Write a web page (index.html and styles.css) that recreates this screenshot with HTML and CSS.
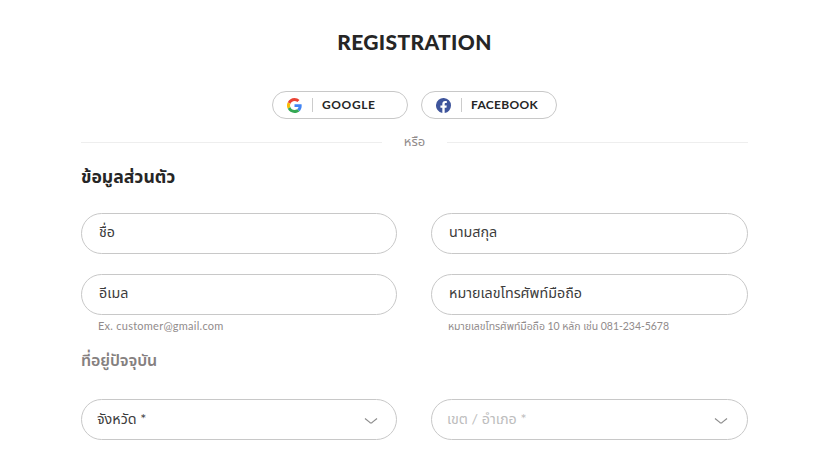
FILE: index.html
```html
<!DOCTYPE html>
<html lang="th">
<head>
  <meta charset="UTF-8" />
  <meta name="viewport" content="width=device-width, initial-scale=1.0" />
  <title>Registration</title>
  <link rel="stylesheet" href="styles.css">
</head>
<body>
  <main class="register">
    <h1>REGISTRATION</h1>

    <div class="social">
      <button type="button" class="social-btn google">
        <svg width="15" height="15" viewBox="0 0 48 48">
          <path fill="#EA4335" d="M24 9.5c3.54 0 6.71 1.22 9.21 3.6l6.85-6.85C35.9 2.38 30.47 0 24 0 14.62 0 6.51 5.38 2.56 13.22l7.98 6.19C12.43 13.72 17.74 9.5 24 9.5z"/>
          <path fill="#4285F4" d="M46.98 24.55c0-1.57-.15-3.09-.38-4.55H24v9.02h12.94c-.58 2.96-2.26 5.48-4.78 7.18l7.73 6c4.51-4.18 7.09-10.36 7.09-17.65z"/>
          <path fill="#FBBC05" d="M10.53 28.59a14.5 14.5 0 0 1 0-9.18l-7.98-6.19a24 24 0 0 0 0 21.56l7.98-6.19z"/>
          <path fill="#34A853" d="M24 48c6.48 0 11.93-2.13 15.89-5.81l-7.73-6c-2.15 1.45-4.92 2.3-8.16 2.3-6.26 0-11.57-4.22-13.47-9.91l-7.98 6.19C6.51 42.62 14.62 48 24 48z"/>
        </svg>
        <span class="label">GOOGLE</span>
      </button>
      <button type="button" class="social-btn facebook">
        <svg width="15" height="15" viewBox="0 0 24 24">
          <path fill="#3f559c" d="M24 12a12 12 0 1 0-13.900 11.900v-8.400h-3V12h3V9.400c0-3 1.800-4.700 4.500-4.700 1.300 0 2.700.2 2.700.2v3h-1.500c-1.500 0-1.900.9-1.900 1.900V12h3.300l-.5 3.500h-2.800v8.400A12 12 0 0 0 24 12z"/>
        </svg>
        <span class="label">FACEBOOK</span>
      </button>
    </div>

    <div class="divider"><span>หรือ</span></div>

    <form>
      <h2>ข้อมูลส่วนตัว</h2>
      <div class="row">
        <div class="box">ชื่อ</div>
        <div class="box">นามสกุล</div>
      </div>
      <div class="row contact">
        <div class="field">
          <div class="box">อีเมล</div>
          <p class="hint">Ex. customer@gmail.com</p>
        </div>
        <div class="field">
          <div class="box">หมายเลขโทรศัพท์มือถือ</div>
          <p class="hint phone-hint">หมายเลขโทรศัพท์มือถือ 10 หลัก เช่น 081-234-5678</p>
        </div>
      </div>

      <h2 class="muted">ที่อยู่ปัจจุบัน</h2>
      <div class="row">
        <div class="box select">
          <span>จังหวัด *</span>
          <svg width="14" height="8" viewBox="0 0 14 8"><path d="M1 1.500l4.800 3.900q1.200.9 2.400 0L13 1.500"/></svg>
        </div>
        <div class="box select disabled">
          <span>เขต / อำเภอ *</span>
          <svg width="14" height="8" viewBox="0 0 14 8"><path d="M1 1.500l4.800 3.900q1.200.9 2.400 0L13 1.500"/></svg>
        </div>
      </div>
    </form>
  </main>
</body>
</html>
```
FILE: styles.css
```css
* {
  box-sizing: border-box;
}

body {
  margin: 0;
  background: #fff;
  color: #262626;
  font-family: Lato, "Noto Sans Thai", "Noto Sans", sans-serif;
  overflow: hidden;
}

.register {
  width: 667px;
  margin-left: 81px;
  padding-top: 28px;
}

h1 {
  margin: 0;
  height: 28px;
  line-height: 28px;
  font-size: 21px;
  font-weight: 900;
  letter-spacing: 0.35px;
  text-align: center;
  white-space: nowrap;
}

.social {
  display: flex;
  justify-content: center;
  gap: 13px;
  margin-top: 35px;
}

.social-btn {
  display: flex;
  align-items: center;
  width: 136px;
  height: 28px;
  padding: 0 0 0 14px;
  border: 1px solid #c8c8c8;
  border-radius: 14px;
  background: #fff;
  color: #262626;
  font: 700 12px Lato, sans-serif;
}

.social-btn .label {
  margin-left: 10px;
  padding-left: 9px;
  border-left: 1px solid #ccc;
  line-height: 14px;
}

.google .label {
  letter-spacing: 0.6px;
}

.facebook .label {
  letter-spacing: 0.3px;
}

.divider {
  display: flex;
  align-items: center;
  gap: 22px;
  height: 20px;
  margin-top: 13px;
  color: #918b8b;
  font-size: 13px;
}

.divider::before,
.divider::after {
  content: "";
  flex: 1;
  height: 1px;
  background: #eee;
}

h2 {
  margin: 13px 0 24px;
  height: 24px;
  line-height: 24px;
  font-size: 17.6px;
  font-weight: 700;
}

h2.muted {
  margin-top: 14px;
  margin-bottom: 27px;
  color: #858080;
  font-size: 16px;
  font-weight: 600;
  letter-spacing: -0.1px;
}

.row {
  display: grid;
  grid-template-columns: 316px 317px;
  gap: 34px;
}

.box {
  display: flex;
  align-items: center;
  height: 41px;
  padding: 0 18px 2px 17px;
  border: 1px solid #c8c8c8;
  border-radius: 21px;
  color: #3c3c3c;
  font-size: 14.3px;
  white-space: nowrap;
}

.contact {
  margin-top: 20px;
}

.hint {
  margin: 3px 0 0 17px;
  height: 16px;
  line-height: 16px;
  font-size: 11px;
  letter-spacing: 0.25px;
  color: #918b8b;
  white-space: nowrap;
}

.phone-hint {
  font-size: 10.5px;
  letter-spacing: -0.05px;
}

.select {
  justify-content: space-between;
  padding: 0 18px 0 15px;
}

.select svg {
  margin-top: 3px;
}

.select path {
  fill: none;
  stroke: #8c8c8c;
  stroke-width: 1.2;
}

.disabled {
  padding-right: 19px;
  color: #bdbdbd;
}
```
